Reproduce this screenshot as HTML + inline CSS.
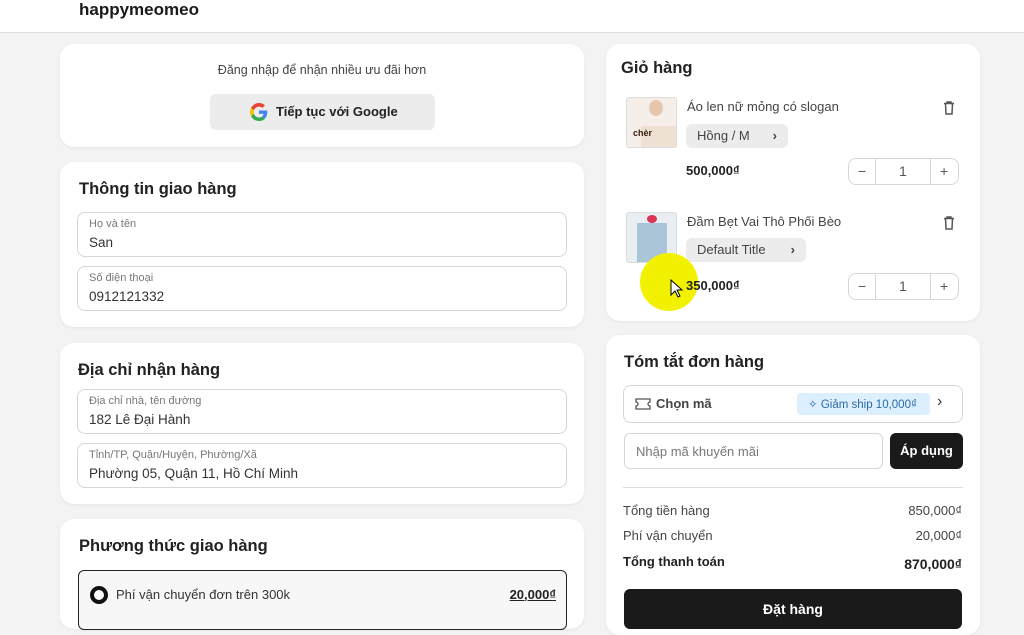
<!DOCTYPE html>
<html><head><meta charset="utf-8"><style>
*{box-sizing:border-box;margin:0;padding:0}
body{width:1024px;height:616px;overflow:hidden;background:#f3f3f3;font-family:"Liberation Sans",sans-serif;color:#1a1a1a;position:relative}
.a{position:absolute}
.hdr{left:0;top:0;width:1024px;height:33px;background:#fff;border-bottom:1px solid #ddd}
.card{background:#fff;border-radius:14px;box-shadow:0 1px 3px rgba(0,0,0,.06)}
h2{position:absolute;font-size:16.5px;font-weight:bold;color:#222}
.inp{position:absolute;left:17px;width:490px;height:45px;border:1px solid #d6d6d6;border-radius:8px}
.inp .l{position:absolute;left:11px;top:5px;font-size:11px;color:#777}
.inp .v{position:absolute;left:11px;top:22px;font-size:13.5px;color:#333}
.qty{position:absolute;width:111px;height:27px;border:1px solid #d6d6d6;border-radius:8px;font-size:14px;color:#555}
.qty span{position:absolute;top:4px}
.qty i{position:absolute;top:0;width:1px;height:25px;background:#d6d6d6}
.chip{position:absolute;height:24px;background:#ececec;border-radius:6px;font-size:13px;color:#444;padding:4px 11px}
.thumb{position:absolute;width:51px;height:51px;border:1px solid #ddd;border-radius:3px;background:#f6efe9;overflow:hidden}
.row{position:absolute;left:17px;width:339px;font-size:13px;color:#444}
.row b{font-weight:normal;float:right}
</style></head><body>
<div class="a hdr"><div class="a" style="left:79px;top:0;font-size:17px;font-weight:bold;color:#1a1a1a">happymeomeo</div></div>

<div class="a card" style="left:60px;top:44px;width:524px;height:103px">
  <div class="a" style="left:0;width:524px;top:19px;text-align:center;font-size:12.5px;color:#444">Đăng nhập để nhận nhiều ưu đãi hơn</div>
  <div class="a" style="left:150px;top:50px;width:225px;height:36px;background:#ececec;border-radius:6px">
    <svg class="a" style="left:40px;top:9px" width="18" height="18" viewBox="0 0 48 48"><path fill="#EA4335" d="M24 9.5c3.5 0 6.6 1.2 9.1 3.6l6.8-6.8C35.8 2.4 30.2 0 24 0 14.6 0 6.6 5.4 2.7 13.3l7.9 6.1C12.5 13.6 17.8 9.5 24 9.5z"/><path fill="#4285F4" d="M46.1 24.5c0-1.6-.1-3.1-.4-4.5H24v9h12.4c-.5 2.9-2.2 5.3-4.6 7l7.4 5.8c4.3-4 6.9-9.9 6.9-17.3z"/><path fill="#FBBC05" d="M10.5 28.6c-.5-1.4-.8-3-.8-4.6s.3-3.2.8-4.6l-7.9-6.1C1 16.6 0 20.2 0 24s1 7.4 2.7 10.7l7.8-6.1z"/><path fill="#34A853" d="M24 48c6.5 0 11.9-2.1 15.9-5.8l-7.4-5.8c-2.1 1.4-4.8 2.3-8.5 2.3-6.2 0-11.5-4.2-13.4-9.9l-7.9 6.1C6.6 42.6 14.6 48 24 48z"/></svg>
    <div class="a" style="left:66px;top:10px;font-size:13px;font-weight:bold;color:#222">Tiếp tục với Google</div>
  </div>
</div>

<div class="a card" style="left:60px;top:162px;width:524px;height:165px">
  <h2 style="left:19px;top:18px">Thông tin giao hàng</h2>
  <div class="inp" style="top:50px"><div class="l">Họ và tên</div><div class="v">San</div></div>
  <div class="inp" style="top:104px"><div class="l">Số điện thoại</div><div class="v">0912121332</div></div>
</div>

<div class="a card" style="left:60px;top:343px;width:524px;height:161px">
  <h2 style="left:18px;top:18px">Địa chỉ nhận hàng</h2>
  <div class="inp" style="top:46px"><div class="l">Địa chỉ nhà, tên đường</div><div class="v">182 Lê Đại Hành</div></div>
  <div class="inp" style="top:100px"><div class="l">Tỉnh/TP, Quận/Huyện, Phường/Xã</div><div class="v">Phường 05, Quận 11, Hồ Chí Minh</div></div>
</div>

<div class="a card" style="left:60px;top:519px;width:524px;height:110px">
  <h2 style="left:19px;top:18px">Phương thức giao hàng</h2>
  <div class="a" style="left:18px;top:51px;width:489px;height:60px;border:1.5px solid #222;border-radius:6px;background:#f7f7f7">
    <div class="a" style="left:11px;top:15px;width:18px;height:18px;border:4px solid #111;border-radius:50%;background:#fff"></div>
    <div class="a" style="left:37px;top:16px;font-size:13px;color:#333">Phí vận chuyển đơn trên 300k</div>
    <div class="a" style="right:10px;top:16px;font-size:13px;font-weight:bold;color:#222;text-decoration:underline;text-decoration-thickness:1px">20,000₫</div>
  </div>
</div>

<div class="a card" style="left:606px;top:44px;width:374px;height:277px">
  <h2 style="left:15px;top:15px">Giỏ hàng</h2>
  <div class="thumb" style="left:20px;top:53px"><div class="a" style="left:14px;top:28px;width:36px;height:22px;background:#efe0d4"></div><div class="a" style="left:22px;top:2px;width:14px;height:16px;background:#e8c6ae;border-radius:50%"></div><div class="a" style="left:6px;top:30px;font-size:9px;font-weight:bold;color:#3a2010">chèr</div></div>
  <div class="a" style="left:81px;top:55px;font-size:13px;color:#444">Áo len nữ mỏng có slogan</div>
  <div class="chip" style="left:80px;top:80px;width:102px">Hồng / M <span style="float:right;font-weight:bold">›</span></div>
  <div class="a" style="left:80px;top:119px;font-size:13px;font-weight:bold;color:#222">500,000₫</div>
  <div class="qty" style="left:242px;top:114px"><span style="left:9px">−</span><i style="left:26px"></i><span style="left:50px">1</span><i style="left:81px"></i><span style="left:91px">+</span></div>
  <svg class="a" style="left:337px;top:57px" width="12" height="14" viewBox="0 0 12 14"><path d="M1 2.5h10M4 2.5V1h4v1.5M2.5 2.5l.5 10.5h6l.5-10.5" fill="none" stroke="#555" stroke-width="1.5"/></svg>
  <div class="thumb" style="left:20px;top:168px;background:#e9eef3"><div class="a" style="left:10px;top:10px;width:30px;height:40px;background:#8fb3cc;opacity:.7"></div><div class="a" style="left:20px;top:2px;width:10px;height:8px;background:#d35;border-radius:50%"></div></div>
  <div class="a" style="left:81px;top:170px;font-size:13px;color:#444">Đầm Bẹt Vai Thô Phối Bèo</div>
  <div class="chip" style="left:80px;top:194px;width:120px">Default Title <span style="float:right;font-weight:bold">›</span></div>
  <svg class="a" style="left:337px;top:172px" width="12" height="14" viewBox="0 0 12 14"><path d="M1 2.5h10M4 2.5V1h4v1.5M2.5 2.5l.5 10.5h6l.5-10.5" fill="none" stroke="#555" stroke-width="1.5"/></svg>
  <div class="a" style="left:34px;top:209px;width:58px;height:58px;border-radius:50%;background:#f2f200"></div>
  <div class="a" style="left:80px;top:234px;font-size:13px;font-weight:bold;color:#222">350,000₫</div>
  <svg class="a" style="left:64px;top:235px" width="14" height="20" viewBox="0 0 14 20"><path d="M1 1v15l4-4 3 6 2-1-3-6h5z" fill="#fff" stroke="#000" stroke-width="1"/></svg>
  <div class="qty" style="left:242px;top:229px"><span style="left:9px">−</span><i style="left:26px"></i><span style="left:50px">1</span><i style="left:81px"></i><span style="left:91px">+</span></div>
</div>

<div class="a card" style="left:606px;top:335px;width:374px;height:300px">
  <h2 style="left:18px;top:18px">Tóm tắt đơn hàng</h2>
  <div class="a" style="left:17px;top:50px;width:340px;height:38px;border:1px solid #d6d6d6;border-radius:8px">
    <svg class="a" style="left:11px;top:12px" width="16" height="12" viewBox="0 0 16 12"><path d="M1 1h14v3a2 2 0 0 0 0 4v3H1V8a2 2 0 0 0 0-4z" fill="none" stroke="#555" stroke-width="1.3"/></svg>
    <div class="a" style="left:32px;top:10px;font-size:13px;font-weight:bold;color:#444">Chọn mã</div>
    <div class="a" style="left:173px;top:7px;width:133px;height:22px;background:#dcefff;border-radius:4px;font-size:11.5px;color:#2a6aa8;padding:4px 0 0 11px">✧ Giảm ship 10,000₫</div>
    <div class="a" style="left:313px;top:7px;font-size:16px;color:#333">›</div>
  </div>
  <div class="a" style="left:18px;top:98px;width:259px;height:36px;border:1px solid #d6d6d6;border-radius:6px;font-size:13px;color:#777;padding:10px 0 0 11px">Nhập mã khuyến mãi</div>
  <div class="a" style="left:284px;top:98px;width:73px;height:36px;background:#1a1a1a;border-radius:6px;color:#fff;font-size:13px;font-weight:bold;text-align:center;padding-top:10px">Áp dụng</div>
  <div class="a" style="left:17px;top:152px;width:340px;height:1px;background:#ddd"></div>
  <div class="row" style="top:168px">Tổng tiền hàng<b>850,000₫</b></div>
  <div class="row" style="top:193px">Phí vận chuyển<b>20,000₫</b></div>
  <div class="row" style="top:219px;font-weight:bold;color:#222">Tổng thanh toán<b style="font-weight:bold;font-size:14px;top:2px;position:relative">870,000₫</b></div>
  <div class="a" style="left:18px;top:254px;width:338px;height:40px;background:#1a1a1a;border-radius:6px;color:#fff;font-size:14px;font-weight:bold;text-align:center;padding-top:12px">Đặt hàng</div>
</div>
</body></html>
